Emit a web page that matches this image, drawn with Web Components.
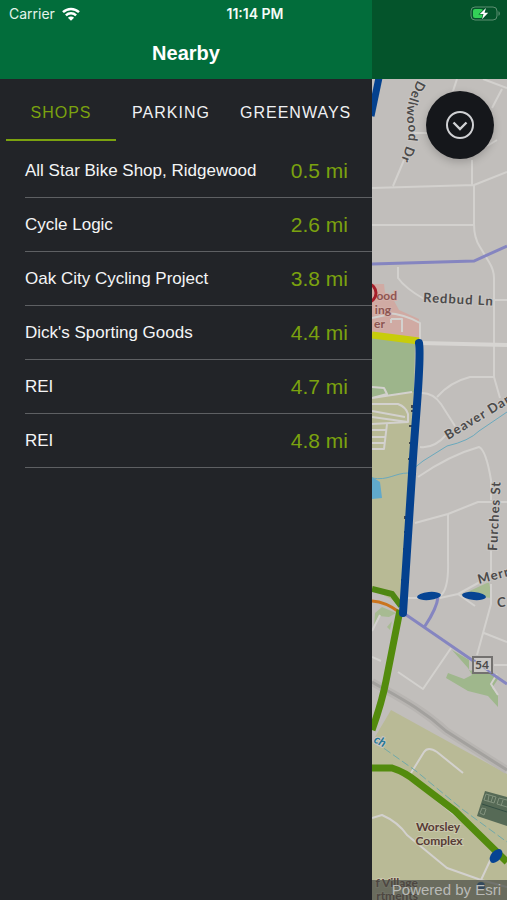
<!DOCTYPE html>
<html lang="en">
<head>
<meta charset="utf-8">
<meta name="viewport" content="width=device-width, initial-scale=1">
<title>Nearby</title>
<style>
  html, body {
    margin: 0;
    height: 100%;
    background: #222428;
  }
  body {
    font-family: "Liberation Sans", Arial, sans-serif;
    color: #fff;
  }
</style>
</head>
<body>
<app-shell></app-shell>
<script>
class StatusBar extends HTMLElement {
  constructor() {
    super()
    this.attachShadow({ mode: 'open' })
    this.shadowRoot.innerHTML = `
      <style>
        :host {
          display: grid;
          grid-template-columns: 1fr auto 1fr;
          align-items: center;
          height: 27px;
          padding: 0 6px 0 9px;
          font: 14px Inter, sans-serif;
          color: #e4f4ea;
        }
        .carrier {
          display: flex;
          align-items: center;
          gap: 7px;
        }
        .time {
          font-weight: 600;
          color: #f4fbf7;
        }
        .battery {
          justify-self: end;
        }
        svg {
          display: block;
        }
      </style>
      <span class="carrier">
        <span>Carrier</span>
        <svg width="18" height="14" viewBox="0 0 18 14" fill="none" stroke="#fff" stroke-width="2.5" aria-hidden="true">
          <path d="M1 5.2C5.6 .8 12.4 .8 17 5.2"/>
          <path d="M3.9 8.4c2.9-2.8 7.3-2.8 10.2 0"/>
          <path d="M9 13.8 5.9 10.7c1.8-1.6 4.4-1.6 6.2 0z" fill="#fff" stroke="none"/>
        </svg>
      </span>
      <span class="time">11:14 PM</span>
      <svg class="battery" width="31" height="15" viewBox="0 0 31 15" aria-hidden="true">
        <rect x="1" y="1" width="26" height="13" rx="4" fill="none" stroke="#5d8f72"/>
        <path d="M28.5 5.2c1.8.6 1.8 4 0 4.6z" fill="#5d8f72"/>
        <rect x="3" y="3" width="10" height="9" rx="2" fill="#33d158"/>
        <path d="M16 2 9.8 8h3.7l-1.5 5.2 6.2-6.4h-3.7z" fill="#fff" stroke="#04542b" stroke-width="1.2" paint-order="stroke"/>
      </svg>
    `
  }
}
customElements.define('status-bar', StatusBar)

class TabItem extends HTMLElement {
  constructor() {
    super()
    this.attachShadow({ mode: 'open' })
    this.shadowRoot.innerHTML = `
      <style>
        :host {
          display: flex;
          min-width: 110px;
        }
        button {
          flex: 1;
          padding: 8px 14px 0;
          border: 0;
          border-bottom: 2px solid transparent;
          background: none;
          color: #f0f1f3;
          font: inherit;
          letter-spacing: 1px;
          white-space: nowrap;
          cursor: pointer;
        }
        :host([active]) button {
          color: #7ba20f;
          border-color: #7ba20f;
        }
      </style>
      <button type="button"><slot></slot></button>
    `
  }
}
customElements.define('tab-item', TabItem)

class PlaceRow extends HTMLElement {
  constructor() {
    super()
    this.attachShadow({ mode: 'open' })
    this.shadowRoot.innerHTML = `
      <style>
        :host {
          display: flex;
          align-items: center;
          justify-content: space-between;
          box-sizing: border-box;
          height: 54px;
          margin-left: 25px;
          padding-right: 24px;
          border-bottom: 1px solid #5e6063;
          font-size: 17px;
          color: #f4f5f6;
        }
        .distance {
          font-size: 21px;
          color: #7ba20f;
          white-space: nowrap;
        }
      </style>
      <span><slot></slot></span>
      <span class="distance"><slot name="distance"></slot></span>
    `
  }

  connectedCallback() {
    this.setAttribute('role', 'listitem')
  }
}
customElements.define('place-row', PlaceRow)

class NearbyDrawer extends HTMLElement {
  #places = [
    ['All Star Bike Shop, Ridgewood', '0.5 mi'],
    ['Cycle Logic', '2.6 mi'],
    ['Oak City Cycling Project', '3.8 mi'],
    ["Dick's Sporting Goods", '4.4 mi'],
    ['REI', '4.7 mi'],
    ['REI', '4.8 mi'],
  ]

  constructor() {
    super()
    this.attachShadow({ mode: 'open' })
    this.#render()
    this.#bindEvents()
  }

  #render() {
    this.shadowRoot.innerHTML = `
      <style>
        :host {
          display: block;
          background: #222428;
        }
        header {
          display: flex;
          align-items: center;
          justify-content: center;
          box-sizing: border-box;
          height: 79px;
          padding-top: 27px;
          background: #026d3b;
        }
        h1 {
          margin: 0;
          font-size: 20px;
        }
        nav {
          display: flex;
          height: 62px;
          padding: 0 6px;
          margin-bottom: 3px;
          font-size: 16px;
        }
      </style>
      <header><h1>Nearby</h1></header>
      <nav>
        <tab-item active>SHOPS</tab-item>
        <tab-item>PARKING</tab-item>
        <tab-item>GREENWAYS</tab-item>
      </nav>
      <div role="list">
        ${this.#places.map(([name, distance]) => `
          <place-row>${name}<span slot="distance">${distance}</span></place-row>
        `).join('')}
      </div>
    `
    this.tabs = this.shadowRoot.querySelectorAll('tab-item')
  }

  #bindEvents() {
    this.tabs.forEach((tab) => {
      tab.addEventListener('click', () => {
        this.tabs.forEach((t) => t.toggleAttribute('active', t === tab))
      })
    })
  }
}
customElements.define('nearby-drawer', NearbyDrawer)

class RoundButton extends HTMLElement {
  constructor() {
    super()
    this.attachShadow({ mode: 'open' })
    this.shadowRoot.innerHTML = `
      <style>
        :host {
          display: block;
        }
        button {
          display: grid;
          place-items: center;
          width: 68px;
          height: 68px;
          padding: 0;
          border: 0;
          border-radius: 50%;
          background: #15171b;
          box-shadow: 0 3px 8px rgba(0, 0, 0, 0.2);
          cursor: pointer;
        }
      </style>
      <button type="button" aria-label="Expand"><slot></slot></button>
    `
  }
}
customElements.define('round-button', RoundButton)

class TrailMap extends HTMLElement {
  constructor() {
    super()
    this.attachShadow({ mode: 'open' })
    this.shadowRoot.innerHTML = `
      <style>
        :host {
          display: block;
          position: relative;
          overflow: hidden;
          background: #c1bebb;
        }
        .map {
          display: block;
          width: 100%;
          height: 100%;
        }
        .map text {
          font-family: Lato, sans-serif;
          font-size: 12px;
          font-weight: 700;
          fill: #4b4a4a;
          stroke: #c9c6c3;
          stroke-width: 2px;
          paint-order: stroke;
        }
        .map .street {
          font-size: 13px;
          letter-spacing: 1px;
        }
        .map .place {
          fill: #573b36;
          stroke: #c9c8ad;
        }
        .map .mall {
          fill: #8d5551;
          stroke: #d3b1aa;
        }
        .map .water {
          fill: #267795;
          font-style: italic;
        }
        round-button {
          position: absolute;
          top: 12px;
          right: 13px;
        }
        .credit {
          position: absolute;
          left: 0;
          right: 0;
          bottom: 0;
          height: 20px;
          padding-right: 6px;
          background: rgba(72, 75, 70, 0.7);
          color: #b9bab7;
          font-size: 15px;
          line-height: 20px;
          text-align: right;
          white-space: nowrap;
        }
      </style>
      <svg class="map" viewBox="372 79 135 821" preserveAspectRatio="xMinYMin slice" fill="none" role="img" aria-label="Map">
        <defs>
          <path id="dellwood" d="M418 80C410 94 406 106 407 118C408 128 410 135 407 144L398 168"/>
        </defs>

        <!-- parks and blocks -->
        <path d="M372 284 384 284 385 293 392 297 399 310 419 319 419 341 372 334z" fill="#d0aaa3"/>
        <path d="M372 337 415 343 414 393 372 397z" fill="#9db58b"/>
        <path d="M372 397 414 392 402 605 372 589z" fill="#b8ba95"/>
        <path d="M372 477 380 482 382 498 372 499z" fill="#60a9cb"/>
        <path d="M461 595 489 582 492 598z" fill="#a7bb92"/>
        <path d="M375 613 382 607 396 613 389 617 379 616 374 626z" fill="#a7bb92"/>
        <path d="M387 627 392 621 390 630z" fill="#a7bb92"/>
        <path d="M452 650 469 660 469 671 483 668 498 679 492 688 498 695 498 707 488 696 468 691 446 678 448 673 464 679 472 675 468 668z" fill="#9fb78c"/>
        <path d="M391 710 507 774 507 900 372 900 372 742z" fill="#b9ba96"/>

        <!-- railroad -->
        <path d="M372 682C400 698 422 709 446 731C463 742 480 753 507 770" stroke="#b8b5b2" stroke-width="8"/>
        <path d="M372 682C400 698 422 709 446 731C463 742 480 753 507 770" stroke="#a3a19e" stroke-width="3"/>

        <!-- side streets -->
        <g stroke="#d3d1ce" stroke-width="2" stroke-linejoin="round">
          <path d="M404 160 393 186M372 188 474 185 507 172M474 185V224Q474 238 480 247L489 262Q494 270 494 278V377L500 398"/>
          <path d="M372 225H474M472 185V160M457 79 453 91M483 79 507 88M502 89 492 108M410 133H427M487 146 497 140"/>
          <path d="M398 267V278Q405 288 424 299M495 300H507"/>
          <path d="M387 313Q404 314 420 323V342M372 318 386 315"/>
          <path d="M391 319H402V332M391 319V323"/>
          <path d="M494 377H470Q450 382 437 397M420 393Q433 392 441 404L455 426M420 447Q434 449 447 434"/>
          <path d="M418 477Q450 455 479 447Q486 450 491 480V500M415 523 448 514 478 502H507M448 514V560Q449 590 440 596M491 548V575"/>
          <path d="M408 598H440L458 594 491 576M458 594 475 606M491 584V604L477 655M484 633 507 642M451 648 423 689 398 672M494 665H507"/>
          <path d="M372 387 384 388 387 394 372 398M372 398 412 392M372 404H398Q406 407 408 414V422L372 417M372 411 405 417M372 424 408 422M387 424 384 449H372M372 430H386M372 437H386M372 443H385"/>
          <path d="M498 695 491 684 497 674M372 657 381 661M380 615 372 631"/>
          <path d="M372 818 382 815Q398 822 407 835L447 868 481 880 495 850M411 773 424 752Q428 746 437 752L463 773M407 776 500 852M481 880 507 887"/>
        </g>
        <path d="M420 343 507 345" stroke="#d7d5d2" stroke-width="4"/>

        <!-- creeks -->
        <path d="M372 478C388 481 395 473 408 473L423 461 447 446Q469 441 479 431L507 412" stroke="#6aa9bd"/>
        <path d="M375 742 416 771 462 809 507 842" stroke="#71a9a9" stroke-dasharray="8 3"/>

        <!-- school buildings -->
        <path d="M485 791 507 797V826L477 816z" fill="#566a56"/>
        <path d="M482 804 507 812" stroke="#344f43"/>
        <g stroke="#82927d">
          <path d="M486 794 496 797 494 803 484 800zM499 798 507 800M497 804 507 807M499 798 497 804M482 808 486 809 484 815 480 813z"/>
          <path d="M489 795 488 801M493 796 491 802M503 800 501 806"/>
        </g>

        <!-- bike routes -->
        <g stroke="#8585c0" stroke-width="3">
          <path d="M372 264 474 261 507 246"/>
          <path d="M402 612 507 684M438 597Q437 608 425 626"/>
        </g>
        <path d="M372 601Q386 602 399 612" stroke="#ca741d" stroke-width="3"/>
        <path d="M372 335 419 341" stroke="#c8cc0b" stroke-width="7"/>
        <path d="M372 589 392 594 401 606" stroke="#4f8712" stroke-width="6"/>
        <path d="M400 610 386 681Q382 702 372 730" stroke="#538b0d" stroke-width="7"/>
        <path d="M372 768H392Q405 772 417 782L455 811 507 862" stroke="#538b0d" stroke-width="7"/>

        <!-- slivers of the street name that the trail covers -->
        <path d="M412 405v3M411 411h3M409 426h3M409 443h3M408 459h3M408 474h3M405 516v3M404 532h3M403 549h3M402 567h3M401 580h3" stroke="#45484b" stroke-width="2"/>
        <path d="M419 343C422 360 415 420 412 474L403 613" stroke="#04418e" stroke-width="8" stroke-linecap="round"/>
        <path d="M381 68 371 116" stroke="#04418e" stroke-width="7"/>
        <g fill="#064493">
          <ellipse cx="429" cy="596" rx="12" ry="4" transform="rotate(-5 429 596)"/>
          <ellipse cx="474" cy="596" rx="12" ry="4" transform="rotate(5 474 596)"/>
          <ellipse cx="496" cy="856" rx="8" ry="5" transform="rotate(-50 496 856)"/>
          <ellipse cx="481" cy="886" rx="4" ry="4"/>
        </g>

        <!-- labels -->
        <text class="street"><textPath href="#dellwood">Dellwood Dr</textPath></text>
        <text class="street" transform="translate(423 302) rotate(3)">Redbud Ln</text>
        <text class="street" transform="translate(448 440) rotate(-31)">Beaver Dam</text>
        <text class="street" transform="translate(497 551) rotate(-87)">Furches St</text>
        <text class="street" transform="translate(479 584) rotate(-15)">Merr</text>
        <text class="street" x="497" y="607">C</text>
        <text class="mall" x="397" y="300" text-anchor="end">ood</text>
        <text class="mall" x="391" y="314" text-anchor="end">ing</text>
        <text class="mall" x="385" y="328" text-anchor="end">er</text>
        <text class="place" x="438" y="831" text-anchor="middle">Worsley</text>
        <text class="place" x="439" y="845" text-anchor="middle">Complex</text>
        <text class="place" x="418" y="887" text-anchor="end">f Village</text>
        <text class="place" x="418" y="900" text-anchor="end">rtments</text>
        <text class="water" transform="translate(373 742) rotate(27)">ch</text>
        <rect x="473" y="657" width="19" height="16" fill="#cbc9c6" stroke="#73716f" stroke-width="2"/>
        <path d="M474 660 491 673" stroke="#8585c0" stroke-width="2"/>
        <text x="482" y="669" text-anchor="middle">54</text>

        <!-- pin, half under the drawer -->
        <ellipse cx="368" cy="293" rx="8" ry="9" stroke="#a51e2a" stroke-width="3"/>
      </svg>
      <round-button>
        <svg width="30" height="30" viewBox="0 0 30 30" fill="none" stroke="#d0d1d4" stroke-width="2" aria-hidden="true">
          <circle cx="15" cy="15" r="13"/>
          <path d="m8.5 12.5 6.5 6.5 6.5-6.5" stroke-width="2.4"/>
        </svg>
      </round-button>
      <div class="credit">Powered by Esri</div>
    `
  }
}
customElements.define('trail-map', TrailMap)

class AppShell extends HTMLElement {
  constructor() {
    super()
    this.attachShadow({ mode: 'open' })
    this.shadowRoot.innerHTML = `
      <style>
        /* the status bar shares its cells with the drawer header */
        :host {
          display: grid;
          grid-template-columns: 372fr 135fr;
          grid-template-rows: 27px 52px 1fr;
          min-height: 100vh;
        }
        nearby-drawer {
          grid-area: 1 / 1 / 4 / 2;
        }
        .toolbar {
          grid-area: 1 / 2 / 3 / 3;
          background: #04542b;
        }
        trail-map {
          grid-area: 3 / 2 / 4 / 3;
        }
        status-bar {
          grid-area: 1 / 1 / 2 / 3;
          z-index: 1;
        }
      </style>
      <nearby-drawer></nearby-drawer>
      <div class="toolbar"></div>
      <trail-map></trail-map>
      <status-bar></status-bar>
    `
  }
}
customElements.define('app-shell', AppShell)
</script>
</body>
</html>
